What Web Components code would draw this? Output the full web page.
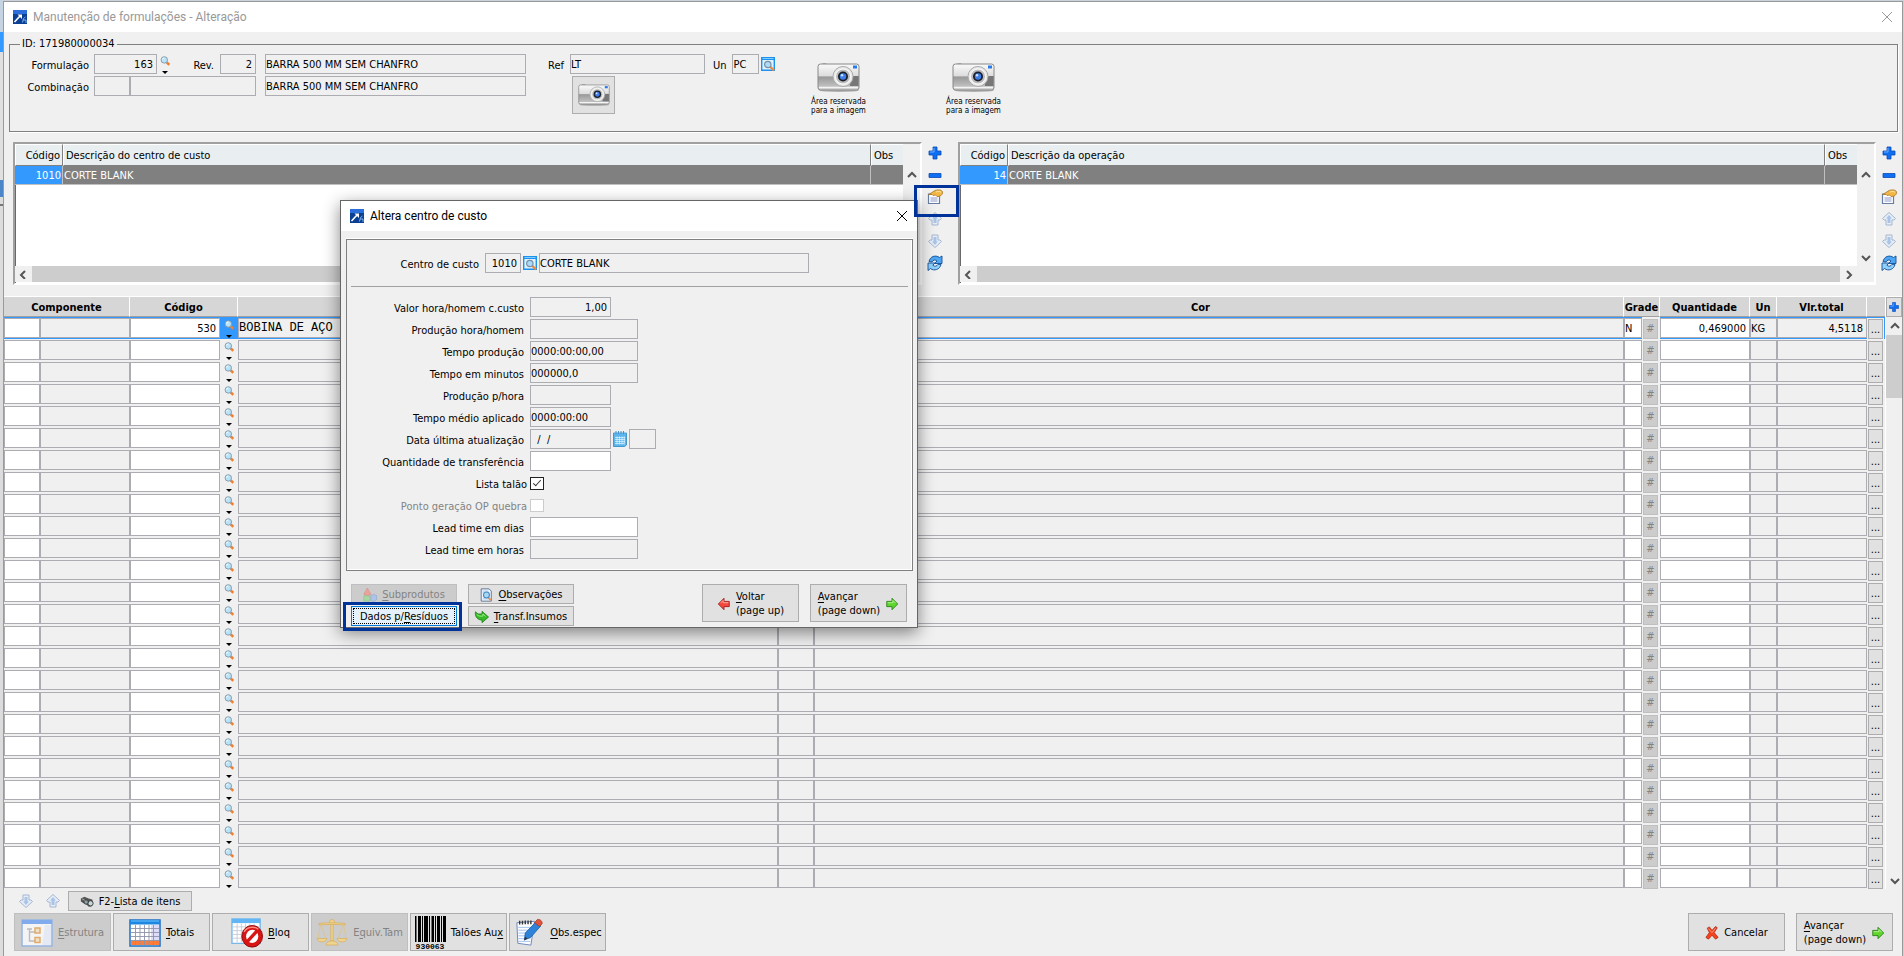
<!DOCTYPE html>
<html lang="pt-BR">
<head>
<meta charset="utf-8">
<title>Manutenção de formulações - Alteração</title>
<style>
  html, body { margin: 0; }
  body {
    box-sizing: border-box;
    min-height: 100vh;
    padding: 1px 1px 0 3px;
    background:
      linear-gradient(#c5d3e3 0 32px, #3399ff 32px 52px, #e0e0e0 52px 180px, #4a86c8 180px 197px, #dcdcdc 197px 204px, #777 204px 206px, #dcdcdc 206px) 0 0 / 3px 100% no-repeat,
      #c9d1dc;
    font: 11px/14px "DejaVu Sans Condensed", "DejaVu Sans", sans-serif;
    color: #000;
    display: flex;
    --face: #f0f0f0;
    --edge: #abadb3;
    --button: #e1e1e1;
    --accent: #3399ff;
    --mark: #003399;
  }
</style>
</head>
<body>
<erp-window></erp-window>

<script>
const RESET = `
  *, *::before, *::after { box-sizing: border-box; }
  :host([hidden]) { display: none; }
  input, button { font: inherit; color: inherit; margin: 0; border-radius: 0; }
  input[type=text] { min-width: 0; width: 100%; height: 20px; padding: 0; border: 1px solid var(--edge); background: #fff; outline: 0; }
  input[readonly] { background: var(--face); }
  input.num { text-align: right; padding-right: 3px; }
  button { padding: 0; }
  u { text-underline-offset: 2px; }
`;

const define = (name, markup, setup) => {
  const template = document.createElement('template');
  template.innerHTML = markup;
  customElements.define(name, class extends HTMLElement {
    constructor() {
      super();
      this.attachShadow({ mode: 'open' });
    }
    connectedCallback() {
      if (this.shadowRoot.childNodes.length) return;
      const holder = document.createElement('template');
      holder.innerHTML = `<style>${RESET}</style>`;
      this.shadowRoot.append(holder.content, template.content.cloneNode(true));
      if (setup) setup(this, this.shadowRoot);
    }
  });
};

/* ---------- icons ---------- */
const LENS = `<path d="M9 9l3.500 3.500" stroke="#f08030" stroke-width="3.500"/><path d="M8 8l2 2" stroke="#999" stroke-width="2"/><circle cx="5.500" cy="5.500" r="4.500" fill="#b8e4fa" stroke="#8795a5" stroke-width="1.300"/><path d="M3 5a2.500 2.500 0 0 1 2.500-2.200" fill="none" stroke="#fff" stroke-width="1.400"/>`;
const CAMERA = `
  <defs><linearGradient id="b" x1="0" y1="0" x2="0" y2="1"><stop offset="0" stop-color="#fafafa"/><stop offset=".45" stop-color="#ddd"/><stop offset=".5" stop-color="#999"/><stop offset="1" stop-color="#cfcfcf"/></linearGradient></defs>
  <ellipse cx="22" cy="28.500" rx="20" ry="1.500" fill="#0004"/>
  <path d="M4 3c0-2 7-2 7 0z" fill="#777"/>
  <rect x="1" y="2" width="41" height="26" rx="2.500" fill="url(#b)" stroke="#888"/>
  <path d="M2 5h39M2 25.500h39" stroke="#f4f4f4" stroke-width="1.500"/>
  <path d="M33 14h8.500v10H33z" fill="#777"/>
  <rect x="36" y="3.500" width="4" height="3" fill="#2a7bea"/>
  <circle cx="26" cy="14.500" r="10" fill="#e9e9e9" stroke="#aaa"/>
  <circle cx="26" cy="14.500" r="7.500" fill="#bbb" stroke="#fff"/>
  <circle cx="26" cy="14.500" r="5" fill="#1a1f2a"/><circle cx="26" cy="14.500" r="3.200" fill="#3f7de8"/><circle cx="25" cy="13.300" r="1.200" fill="#cfe2ff"/>`;
const ARROW_UP = `<path d="M8 1.500l6.500 6-1.500 1.500h-2v5H5V9H3L1.500 7.500z" fill="#e6eef8" stroke="#a5b6cf"/><path d="M8 4l3 3.500H9.500V12h-3V7.500H5z" fill="#a9c4e6"/>`;
const GREEN = `<path d="M1.500 5h6V1.500L14 8l-6.500 6.500V11h-6z" fill="#5fd62c" stroke="#2b7d16" stroke-linejoin="round"/><path d="M2.500 6.500h6V4l3 3" fill="none" stroke="#b9f59a"/>`;
const ICONS = {
  app: ['0 0 14 14', `<path d="M0 0h14v14H0z" fill="#0b3f94"/><path d="M0 0h14v4H0z" fill="#2a6ddb"/><path d="M1.500 12l6-6.500" stroke="#fff" stroke-width="1.600"/><path d="M4.500 4.500H9V9z" fill="#fff"/><path d="M9.500 12.500l1-4 2-1.500M10 10h3v3" fill="none" stroke="#7fb0ef"/>`],
  close: ['0 0 12 12', `<path d="M1 1l10 10M11 1L1 11" stroke="currentColor" fill="none"/>`],
  lens: ['0 0 13 14', LENS],
  lookup: ['0 0 14 14', `<path d="M.7.700h12.600v12.600H.7z" fill="#dff3fd" stroke="#1e90ee" stroke-width="1.400"/><path d="M0 0h14v3H0z" fill="#1e90ee"/><path d="M1.500 1.500h11" stroke="#7fd0ff"/><path d="M9 9.500l4 4" stroke="#ef8a3c" stroke-width="2.400"/><circle cx="6.800" cy="7.500" r="3.200" fill="#a9dcf8" stroke="#7c8ea3" stroke-width="1.200"/>`],
  camera: ['0 0 43 31', CAMERA],
  plus: ['0 0 16 16', `<path d="M6 2h4v4h4v4h-4v4H6v-4H2V6h4z" fill="#0f6ef2" stroke="#0a4db8" stroke-width=".8"/><path d="M7 3v4H3" fill="none" stroke="#6db2ff"/>`],
  minus: ['0 0 16 16', `<path d="M2 6.500h12v4H2z" fill="#0f6ef2" stroke="#0a4db8" stroke-width=".8"/>`],
  edit: ['0 0 16 16', `<path d="M1.500 5h11v9.500h-11z" fill="#fff" stroke="#667da5" stroke-width="1.200"/><path d="M3.500 8h7v5h-7z" fill="#c6cbe6"/><path d="M1.500 5.500L5 3.500l3-2c3-1 7-1 7.500 1.500S13 8 10 7.500L8.500 6 6 6.500l-1-1z" fill="#f2b743" stroke="#a8752a" stroke-width=".8"/><path d="M9 3c2-.8 4-.6 5 .3" stroke="#fde6a5" fill="none"/>`],
  up: ['0 0 16 16', ARROW_UP],
  down: ['0 0 16 16', `<g transform="rotate(180 8 8)">${ARROW_UP}</g>`],
  refresh: ['0 0 16 16', `<path d="M2 6.500C3 1.500 8.500-.5 12.500 2.500L15 1v7.500H7.500l2.500-2.500C8.500 4.500 6 4.800 5 7z" fill="#4ea6f2" stroke="#134f96" stroke-width=".9"/><path d="M14 9.500c-1 5-7 7-10.500 4L1 15.500V8h7L5.800 10.200c1.700 1.600 4 1.300 5.200-.9z" fill="#8fd0fb" stroke="#134f96" stroke-width=".9"/>`],
  calendar: ['0 0 14 16', `<path d="M.5 2h13v12l-2 1.500H.5z" fill="#5eb5ec" stroke="#2b86c5" stroke-width=".8"/><path d="M1 2h12v2H1z" fill="#58b4ee"/><path d="M3 0v3M5.500 0v3M8 0v3M10.500 0v3" stroke="#4a90c4"/><path d="M2 6.500h10M2 8.500h10M2 10.500h10M2 12.500h9M4 5.500v8M6.500 5.500v8M9 5.500v8M11.300 5.500v8" stroke="#e3f5ff" stroke-width=".7"/>`],
  shapes: ['0 0 16 16', `<path d="M5 0l4 7c-1 2-7 2-8 0z" fill="#f29a8e" stroke="#d87468" stroke-width=".6"/><path d="M1 9h7v6H1z" fill="#9fdc9a" stroke="#76b872" stroke-width=".6"/><path d="M9 8.500l3-1.200 3.500 1.200v5L12 15.500l-3-1.500z" fill="#a5c3f2" stroke="#7696cc" stroke-width=".6"/>`],
  notes: ['0 0 14 16', `<path d="M1.500 1h9l2.500 2.500V15H1.500z" fill="#f5f9ff" stroke="#50688c"/><path d="M3 3.500h7M3 5.500h8M3 12.500h8" stroke="#9cc4ee"/><path d="M9 10l3.500 4" stroke="#ef8a3c" stroke-width="2"/><circle cx="7.500" cy="8" r="3.400" fill="#a4d8f7" stroke="#4d86bd" stroke-width="1.200"/>`],
  transfer: ['0 0 16 14', `<path d="M.5 1l3 2.500h4.500V.5L15.500 7 8 13.500v-3C3.500 10.500-.5 7 .5 1z" fill="#35bb27" stroke="#1c6f14" stroke-width=".8" stroke-linejoin="round"/><path d="M2 4c2 2.500 4 2 7 2V3.500l3 3" stroke="#a2f08c" fill="none"/>`],
  next: ['0 0 15 16', GREEN],
  back: ['0 0 15 16', `<path d="M13.500 5h-6V1.500L1 8l6.500 6.500V11h6z" fill="#f5483c" stroke="#a01818" stroke-linejoin="round"/><path d="M12.500 6.500h-6V4L3.500 7" fill="none" stroke="#ffb3aa"/>`],
  cancel: ['0 0 16 16', `<path d="M2.500 2.500L5 1l3 4 4-4.500 2 1.500-3.500 5.500L15 13l-3 2-4-4.500L4 15l-3-2 4-5.500z" fill="#f7431d" stroke="#a41d0c" stroke-width=".8" stroke-linejoin="round"/><path d="M4 3l4 4.500 4-5" stroke="#ff9c80" fill="none"/>`],
  binoculars: ['0 0 16 14', `<path d="M1 3l4-2 5 2 4 1 1 4-2 4-3 .5-3-3-3-1-3-2z" fill="#555"/><circle cx="12" cy="8.500" r="3" fill="#c5d5db" stroke="#333"/><circle cx="7" cy="7" r="2.500" fill="#8ba0a8" stroke="#333"/><path d="M2.500 3.500l3 1.500" stroke="#bbb"/>`],
  tree: ['0 0 32 28', `<path d="M1 1h30v26H1z" fill="#fff" stroke="#8ab0e8" stroke-width="1.500"/><path d="M1 1h30v4H1z" fill="#6fa3f5"/><path d="M6 10h5M8.500 10v12H14M8.500 13H14" stroke="#b8b8b8" fill="none" stroke-width="1.400"/><path d="M14 9h5v5h-5zM14 18.500h5v5h-5z" fill="#fde6c3" stroke="#e5a458" stroke-width="1.500"/><path d="M24 6h6v20h-9z" fill="#dfe8fb" opacity=".6"/>`],
  totals: ['0 0 32 28', `<path d="M1 1h30v26H1z" fill="#fff" stroke="#1e6fc4" stroke-width="1.500"/><path d="M22 6h8v16h-8z" fill="#dcdcf8"/><path d="M1 1h30v4.500H1z" fill="#1c86e0"/><path d="M2 2h28" stroke="#6fc3ff"/><path d="M2 21.500h28v4.500H2z" fill="#ff7b38"/><path d="M6.500 6v20M11 6v20M15.500 6v20M20 6v20M24.500 6v20M2 9.500h28M2 13.500h28M2 17.500h28M2 21.500h28" stroke="#8f93a8" stroke-width=".9"/>`],
  block: ['0 0 34 32', `<path d="M1 1h30v26H1z" fill="#fff" stroke="#79b8ea" stroke-width="1.500"/><path d="M1 1h30v4.500H1z" fill="#62b6f5"/><path d="M6.500 6v20M11 6v20M15.500 6v20M20 6v20M24.500 6v20M2 9.500h28M2 13.500h28M2 17.500h28M2 21.500h28" stroke="#c3c6d2" stroke-width=".9"/><ellipse cx="22.500" cy="19.500" rx="11" ry="11.500" fill="#d81414" stroke="#8d0606"/><ellipse cx="22.500" cy="19.500" rx="6.500" ry="7" fill="#fff"/><path d="M17.500 25l10-11" stroke="#d81414" stroke-width="3.500"/><path d="M14 15c2-5 10-7 15-3" stroke="#ff8a80" fill="none" stroke-width="1.500"/>`],
  scale: ['0 0 32 28', `<g fill="#f8d77c" stroke="#dba94a" stroke-width=".8"><path d="M14.800 5h2.400v17h-2.400z"/><circle cx="16" cy="3" r="2.500"/><path d="M3 4.500c8-1 18-1 26 0v1.500c-8-.8-18-.8-26 0z"/><path d="M1 19.500h10c-1 4.500-9 4.500-10 0zM21 19.500h10c-1 4.500-9 4.500-10 0z"/><path d="M10 26c0-2.500 3-4 6-4s6 1.500 6 4z"/></g><path d="M4.500 6L2 19.500M5 6l5 13.500M27 6l-5 13.500M27.500 6L30 19.500" stroke="#e3c27a" stroke-width=".8"/>`],
  barcode: ['0 0 32 34', `<path d="M1 0h1.500v26H1zM4 0h3v26H4zM8 0h1v26H8zM10 0h4v26h-4zM15 0h1v26h-1zM17.500 0h2.500v26h-2.500zM21 0h1v26h-1zM23 0h3v26h-3zM27 0h1v26h-1zM29 0h3v26h-3z" fill="#000"/><text x="16" y="33" text-anchor="middle" font-family="Liberation Mono, monospace" font-weight="bold" font-size="8">930063</text>`],
  pencil: ['0 0 30 30', `<path d="M2 4l19-1.500L17 28 3 26z" fill="#fbfdff" stroke="#6b83b8"/><path d="M3.500 9h15M3.500 12h14.500M3.500 15h14M3.500 18h13.500M3.500 21h13M3.500 24h13" stroke="#9fc1ee"/><path d="M5 2v4M8 2v4M11 1.500v4M14 1.500v4M17 1.500v4" stroke="#333" stroke-width="1.500"/><path d="M11 15L22 3.500l5.500 4L17 19.500l-7 3z" fill="#2e83d8" stroke="#1b569c" stroke-width=".8"/><path d="M21 4l3-3.500c3-.5 5.500 2 5 4.500l-2.500 3z" fill="#e0533c" stroke="#a5331f" stroke-width=".8"/><path d="M9.500 23l1.500-4 2.500 2z" fill="#333"/>`]
};

define('erp-icon', `<style>:host{display:inline-block;width:14px;height:14px;flex:none} svg{display:block;width:100%;height:100%;overflow:visible}</style><svg aria-hidden="true"></svg>`,
  (host, root) => {
    const [box, art] = ICONS[host.getAttribute('name')];
    const svg = root.querySelector('svg');
    svg.setAttribute('viewBox', box);
    svg.innerHTML = art;
  });

/* ---------- chrome ---------- */
define('erp-titlebar', `<style>
  :host { display: flex; align-items: center; height: 30px; padding: 0 9px; background: #fff; font: 12px/16px Roboto, sans-serif; }
  h1 { margin: 0 auto 0 6px; font: inherit; }
  button { border: 0; background: none; width: 12px; height: 12px; color: inherit; }
  button erp-icon { width: 12px; height: 12px; display: block; }
</style><erp-icon name="app"></erp-icon><h1><slot></slot></h1><button type="button" aria-label="Fechar"><erp-icon name="close"></erp-icon></button>`);

define('erp-button', `<style>
  :host { display: block; }
  button { display: flex; align-items: center; justify-content: center; gap: 5px; width: 100%; height: 100%; padding-top: 1px; border: 1px solid #adadad; background: var(--button); text-align: left; white-space: nowrap; }
  button:disabled { background: #ccc; border-color: #bfbfbf; color: #838383; }
  :host([disabled]) ::slotted(erp-icon) { opacity: .8; }
  :host([focused]) button { background: #e5f1fb; border-color: #0078d7; outline: 1px dotted #000; outline-offset: -3px; }
  :host([marked]) { position: relative; }
  :host([marked])::after { content: ""; position: absolute; inset: -4px -5px -5px -8px; border: 3px solid var(--mark); pointer-events: none; }
</style><button type="button"><slot></slot></button>`,
  (host, root) => { root.querySelector('button').disabled = host.hasAttribute('disabled'); });

const scrollArrow = { up: 'M1 6l4-4 4 4', down: 'M1 3l4 4 4-4', left: 'M6 1L2 5l4 4', right: 'M3 1l4 4-4 4' };
define('erp-scrollbar', `<style>
  :host { display: flex; flex-direction: column; width: 17px; background: var(--face); }
  :host([horizontal]) { flex-direction: row; width: auto; height: 16px; }
  button { flex: none; width: 17px; height: 18px; border: 0; background: none; display: grid; place-items: center; }
  :host([horizontal]) button { height: 16px; }
  svg { width: 10px; height: 9px; }
  .track { flex: 1; }
  .thumb { background: #cdcdcd; }
</style><button type="button" aria-label="Voltar"></button><div class="track"><div class="thumb"></div></div><button type="button" aria-label="Avançar"></button>`,
  (host, root) => {
    const horizontal = host.hasAttribute('horizontal');
    const names = horizontal ? ['left', 'right'] : ['up', 'down'];
    root.querySelectorAll('button').forEach((b, i) => {
      b.innerHTML = `<svg viewBox="0 0 10 9"><path d="${scrollArrow[names[i]]}" fill="none" stroke="#555" stroke-width="2"/></svg>`;
    });
    const thumb = root.querySelector('.thumb');
    thumb.style[horizontal ? 'width' : 'height'] = host.getAttribute('thumb');
    thumb.style[horizontal ? 'height' : 'width'] = '100%';
  });

define('erp-sidetools', `<style>
  :host { display: flex; flex-direction: column; }
  button { position: relative; width: 18px; height: 22px; margin-left: 4px; border: 0; background: none; display: grid; place-items: center; }
  erp-icon { width: 16px; height: 16px; }
  :host([mark]) .edit::after { content: ""; position: absolute; z-index: 6; left: -12px; top: -1px; width: 45px; height: 32px; border: 3px solid var(--mark); }
</style>`,
  (host, root) => {
    for (const [icon, label] of [['plus', 'Incluir'], ['minus', 'Excluir'], ['edit', 'Alterar'], ['up', 'Subir'], ['down', 'Descer'], ['refresh', 'Atualizar']]) {
      const button = document.createElement('button');
      button.type = 'button';
      button.className = icon;
      button.setAttribute('aria-label', label);
      button.innerHTML = `<erp-icon name="${icon}"></erp-icon>`;
      root.append(button);
    }
  });

/* ---------- upper lists ---------- */
define('erp-list', `<style>
  :host { display: grid; grid-template-columns: minmax(0, 1fr) 17px; grid-template-rows: 1fr 16px; height: 143px; padding-bottom: 1px; background: #fff; border: 2px solid #fff; border-color: #a0a0a0 #fff #fff #a0a0a0; box-shadow: inset 1px 1px #696969; }
  table { width: 100%; border-collapse: separate; border-spacing: 0; table-layout: fixed; }
  th, td { padding: 1px 1px 0; text-align: left; font-weight: normal; white-space: nowrap; overflow: hidden; }
  th { height: 22px; padding: 2px 2px 0; background: #e9eef1; border: 1px solid #fff; border-right-color: #808080; border-bottom-color: #808080; }
  th:last-child { border-right: 0; }
  td { height: 19px; background: #808080; color: #fff; border: 0 solid #c0c0c0; border-width: 0 1px 1px 0; }
  td:last-child { border-right: 0; }
  td:first-child { background: var(--accent); }
  th:first-child, td:first-child { width: 48px; text-align: right; }
  th:last-child { width: 32px; }
  .corner { background: var(--face); }
  .v { padding-top: 22px; }
</style>
<div><table><thead><tr><th>Código</th><th class="h"></th><th>Obs</th></tr></thead><tbody><tr><td class="c"></td><td class="d"></td><td></td></tr></tbody></table></div>
<erp-scrollbar class="v" thumb="0"></erp-scrollbar>
<erp-scrollbar horizontal thumb="100%"></erp-scrollbar><div class="corner"></div>`,
  (host, root) => {
    root.querySelector('.h').textContent = host.getAttribute('heading');
    root.querySelector('.c').textContent = host.getAttribute('code');
    root.querySelector('.d').textContent = host.getAttribute('text');
  });

/* ---------- header of the formulation ---------- */
define('formula-header', `<style>
  :host { display: block; padding: 5px 4px 0 5px; }
  fieldset { display: flex; height: 95px; min-width: 0; margin: 0; padding: 3px 0 0; border: 1px solid #808080; box-shadow: 1px 1px #fff; }
  legend { margin-left: 10px; padding: 0 2px; line-height: 14px; }
  .row { display: flex; align-items: center; height: 20px; margin-bottom: 2px; }
  .row label { padding-top: 3px; text-align: right; margin-right: 6px; }
  .row .w78 { width: 79px; margin-right: 5px; } .w41 { width: 41px; }
  .ids { margin-right: 22px; }
  input.code { width: 63px; } input.small { width: 36px; } input.mid { width: 126px; } input.long { width: 261px; margin-left: 9px; }
  input.ref { width: 135px; } input.un { width: 27px; margin-right: 2px; }
  button.pick { width: 16px; height: 20px; border: 0; background: none; display: grid; justify-items: center; align-content: start; gap: 5px; padding-top: 2px; }
  button.pick erp-icon { width: 10px; height: 10px; }
  button.pick::after { content: ""; border: 3px solid transparent; border-top-color: #000; border-bottom: 0; }
  button.look { border: 0; background: none; width: 14px; height: 14px; }
  .un-label { margin-left: 8px; }
  .photo { width: 43px; height: 38px; margin: 1px 0 0 24px; border: 1px solid #adadad; background: var(--button); display: grid; place-items: center; }
  .photo erp-icon { width: 32px; height: 24px; }
  figure { width: 56px; margin: 8px 0 0 35px; text-align: center; font-size: 8px; line-height: 9px; white-space: nowrap; }
  figure + figure { margin-left: 79px; }
  figure erp-icon { width: 43px; height: 31px; display: block; margin: 0 auto 4px; }
</style>
<fieldset><legend>ID: 171980000034</legend>
  <div class="ids">
    <div class="row"><label class="w78" for="f">Formulação</label><input id="f" class="num code" type="text" readonly value="163"><button type="button" class="pick" aria-label="Pesquisar"><erp-icon name="lens"></erp-icon></button><label class="w41" for="r">Rev.</label><input id="r" class="num small" type="text" readonly value="2"><input class="long" type="text" readonly aria-label="Descrição" value="BARRA 500 MM SEM CHANFRO"></div>
    <div class="row"><label class="w78" for="c">Combinação</label><input id="c" class="small" type="text" readonly><input class="mid" type="text" readonly aria-label="Nome da combinação"><input class="long" type="text" readonly aria-label="Descrição da combinação" value="BARRA 500 MM SEM CHANFRO"></div>
  </div>
  <div>
    <div class="row"><label for="ref">Ref</label><input id="ref" class="ref" type="text" readonly value="LT"><label class="un-label" for="un">Un</label><input id="un" class="un" type="text" readonly value="PC"><button type="button" class="look" aria-label="Pesquisar unidade"><erp-icon name="lookup"></erp-icon></button></div>
    <button type="button" class="photo" aria-label="Imagem"><erp-icon name="camera"></erp-icon></button>
  </div>
  <figure><erp-icon name="camera"></erp-icon><figcaption>Área reservada<br>para a imagem</figcaption></figure>
  <figure><erp-icon name="camera"></erp-icon><figcaption>Área reservada<br>para a imagem</figcaption></figure>
</fieldset>`);

/* ---------- items grid ---------- */
define('items-grid', `<style>
  :host { display: grid; grid-template-columns: minmax(0, 1fr) 16px; border-top: 1px solid #fff; }
  table { width: 100%; border-collapse: separate; border-spacing: 0; table-layout: fixed; border-right: 1px solid #fff; }
  th, td { padding: 0; overflow: hidden; }
  th { height: 20px; padding-top: 2px; background: #d6d6d6; border-right: 1px solid #fff; border-bottom: 1px solid #a0a0a0; line-height: 17px; white-space: nowrap; }
  th:last-child { border-right: 0; }
  td { height: 22px; border: solid transparent; border-width: 1px 0; vertical-align: top; }
  input[type=text], td button { display: block; }
  .sel td:not(.hash) { border-color: var(--accent); }
  .sel .more { border-right: 1px solid var(--accent); }
  .sel .pick { background: var(--accent); }
  .mono { font: 12px/14px "Liberation Mono", monospace; }
  .pick button { width: 18px; height: 20px; border: 0; background: none; display: grid; justify-items: center; align-content: start; gap: 5px; padding-top: 2px; }
  .pick erp-icon { width: 10px; height: 10px; }
  .pick button::after { content: ""; border: 3px solid transparent; border-top-color: #000; border-bottom: 0; }
  td.hash, td.more { border-bottom: 0; }
  .hash button, .more button { width: 15px; height: 20px; margin: 1px 0 0 1px; border: 1px solid #adadad; background: var(--button); }
  .hash button { border-color: #bfbfbf; background: #ccc; color: #838383; }
  .more button { padding-top: 2px; }
  aside { display: flex; flex-direction: column; }
  aside .add { width: 16px; height: 20px; border: 1px solid #adadad; background: var(--button); display: grid; place-items: center; }
  aside .add erp-icon { width: 12px; height: 12px; }
  aside erp-scrollbar { flex: 1; width: 16px; }
</style>
<table>
  <colgroup><col style="width:36px"><col style="width:90px"><col style="width:90px"><col style="width:18px"><col style="width:540px"><col style="width:36px"><col><col style="width:18px"><col style="width:18px"><col style="width:90px"><col style="width:27px"><col style="width:90px"><col style="width:18px"></colgroup>
  <thead><tr><th colspan="2">Componente</th><th colspan="2">Código</th><th></th><th colspan="2">Cor</th><th colspan="2">Grade</th><th>Quantidade</th><th>Un</th><th>Vlr.total</th><th></th></tr></thead>
  <tbody></tbody>
</table>
<aside><button type="button" class="add" aria-label="Incluir item"><erp-icon name="plus"></erp-icon></button><erp-scrollbar thumb="63px"></erp-scrollbar></aside>`,
  (host, root) => {
    const body = root.querySelector('tbody');
    const cell = (label, value = '', extra = '') => `<td><input type="text" aria-label="${label}" value="${value}" ${extra}></td>`;
    for (let i = 0; i < 26; i++) {
      const v = i ? {} : { code: '530', text: 'BOBINA DE AÇO C', grade: 'N', qty: '0,469000', unit: 'KG', total: '4,5118' };
      const tr = document.createElement('tr');
      if (!i) tr.className = 'sel';
      tr.innerHTML = cell('Componente') + cell('Nome do componente', '', 'readonly') + cell('Código', v.code, 'class="num"') +
        `<td class="pick"><button type="button" aria-label="Pesquisar código"><erp-icon name="lens"></erp-icon></button></td>` +
        cell('Descrição', v.text, 'readonly class="mono"') + cell('Código da cor', '', 'readonly') + cell('Cor', '', 'readonly') + cell('Grade', v.grade) +
        `<td class="hash"><button type="button" disabled>#</button></td>` +
        cell('Quantidade', v.qty, 'class="num"') + cell('Unidade', v.unit, 'readonly') + cell('Valor total', v.total, 'readonly class="num"') +
        `<td class="more"><button type="button">...</button></td>`;
      body.append(tr);
    }
  });

/* ---------- footer ---------- */
define('erp-footer', `<style>
  :host { display: block; padding: 2px 9px 4px 10px; }
  .list { display: flex; align-items: center; height: 20px; margin-bottom: 2px; }
  .list .nav { width: 16px; height: 16px; margin-left: 4px; margin-right: 7px; border: 0; background: none; }
  .list .nav erp-icon { width: 16px; height: 16px; display: block; }
  .list erp-button { width: 124px; height: 20px; }
  .bar { display: flex; gap: 2px; height: 38px; }
  .bar erp-button { width: 97px; }
  .push { margin-left: auto; margin-right: 9px; }
  .big { width: 32px; height: 28px; }
  .tall { width: 32px; height: 34px; }
</style>
<div class="list">
  <button type="button" class="nav" aria-label="Descer"><erp-icon name="down"></erp-icon></button>
  <button type="button" class="nav" aria-label="Subir"><erp-icon name="up"></erp-icon></button>
  <erp-button><erp-icon name="binoculars"></erp-icon><span>F2-<u>L</u>ista de itens</span></erp-button>
</div>
<div class="bar">
  <erp-button disabled><erp-icon class="big" name="tree"></erp-icon><span><u>E</u>strutura</span></erp-button>
  <erp-button><erp-icon class="big" name="totals"></erp-icon><span><u>T</u>otais</span></erp-button>
  <erp-button><erp-icon class="tall" name="block"></erp-icon><span><u>B</u>loq</span></erp-button>
  <erp-button disabled><erp-icon class="big" name="scale"></erp-icon><span>E<u>q</u>uiv.Tam</span></erp-button>
  <erp-button><erp-icon class="tall" name="barcode"></erp-icon><span>Talões Au<u>x</u></span></erp-button>
  <erp-button><erp-icon class="big" name="pencil"></erp-icon><span><u>O</u>bs.espec</span></erp-button>
  <erp-button class="push"><erp-icon name="cancel"></erp-icon><span>Cancelar</span></erp-button>
  <erp-button><span><u>A</u>vançar<br>(page down)</span><erp-icon name="next"></erp-icon></erp-button>
</div>`);

/* ---------- dialog ---------- */
define('cost-field', `<style>
  :host { display: flex; align-items: center; height: 20px; }
  label { width: 173px; margin-right: 6px; padding-top: 3px; text-align: right; white-space: nowrap; }
  input[type=text] { width: 81px; }
  :host([wide]) input[type=text] { width: 108px; }
  input[type=checkbox] { appearance: none; position: relative; width: 14px; height: 13px; border: 1px solid #222; background: #fff; }
  input[type=checkbox]:checked::after { content: ""; position: absolute; left: 4px; top: 0; width: 4px; height: 8px; border: solid #333; border-width: 0 1px 1px 0; transform: rotate(42deg); }
  input[type=checkbox]:disabled { border-color: #ccc; }
  :host([disabled]) { color: #838383; }
  :host([check]) label { width: 176px; margin-right: 3px; }
</style><label for="i"></label><input id="i" type="text"><slot></slot>`,
  (host, root) => {
    const input = root.querySelector('input');
    root.querySelector('label').textContent = host.getAttribute('label');
    if (host.hasAttribute('check')) {
      input.type = 'checkbox';
      input.defaultChecked = host.getAttribute('check') === 'on';
      input.disabled = host.hasAttribute('disabled');
      return;
    }
    input.value = host.getAttribute('value') || '';
    input.readOnly = !host.hasAttribute('editable');
    if (host.hasAttribute('numeric')) input.className = 'num';
  });

define('cost-dialog', `<style>
  :host { display: block; position: absolute; z-index: 5; left: 336px; top: 198px; width: 578px; border: 1px solid #666; background: var(--face); box-shadow: 0 5px 16px #0007; }
  .panel { margin: 8px 4px 0 5px; height: 332px; padding: 13px 4px 0; border: 1px solid #808080; box-shadow: inset 0 -1px #fff, inset -1px 0 #fff, 0 -1px #fff; }
  .center { display: flex; align-items: center; height: 20px; }
  .center label { width: 128px; margin-right: 6px; padding-top: 3px; text-align: right; }
  .center .code { width: 36px; } .center .name { width: 270px; }
  .look { flex: none; width: 14px; height: 14px; margin: 0 2px; border: 0; background: none; }
  hr { margin: 13px 0 10px; border: 0; border-top: 1px solid #a0a0a0; }
  .fields { display: grid; gap: 2px; }
  .cal { width: 14px; height: 16px; margin: 0 2px; border: 0; background: none; }
  .cal erp-icon { width: 14px; height: 16px; display: block; }
  input.hour { width: 27px; }
  .actions { display: flex; justify-content: space-between; padding: 13px 10px 0; height: 56px; }
  .left { display: grid; grid-template: 20px 20px / 106px 106px; gap: 2px 11px; }
  .right { display: flex; gap: 11px; height: 38px; }
  .right erp-button { width: 97px; }
</style>
<erp-titlebar>Altera centro de custo</erp-titlebar>
<div class="panel">
  <div class="center"><label for="cc">Centro de custo</label><input id="cc" class="num code" type="text" readonly value="1010"><button type="button" class="look" aria-label="Pesquisar centro de custo"><erp-icon name="lookup"></erp-icon></button><input class="name" type="text" readonly aria-label="Nome do centro de custo" value="CORTE BLANK"></div>
  <hr>
  <div class="fields">
    <cost-field label="Valor hora/homem c.custo" numeric value="1,00"></cost-field>
    <cost-field label="Produção hora/homem" wide></cost-field>
    <cost-field label="Tempo produção" wide value="0000:00:00,00"></cost-field>
    <cost-field label="Tempo em minutos" wide value="000000,0"></cost-field>
    <cost-field label="Produção p/hora"></cost-field>
    <cost-field label="Tempo médio aplicado" value="0000:00:00"></cost-field>
    <cost-field label="Data última atualização" value="  /  /"><button type="button" class="cal" aria-label="Calendário"><erp-icon name="calendar"></erp-icon></button><input class="hour" type="text" readonly aria-label="Hora da atualização"></cost-field>
    <cost-field label="Quantidade de transferência" editable></cost-field>
    <cost-field label="Lista talão" check="on"></cost-field>
    <cost-field label="Ponto geração OP quebra" check="off" disabled></cost-field>
    <cost-field label="Lead time em dias" wide editable></cost-field>
    <cost-field label="Lead time em horas" wide></cost-field>
  </div>
</div>
<div class="actions">
  <div class="left">
    <erp-button disabled><erp-icon name="shapes"></erp-icon><span><u>S</u>ubprodutos</span></erp-button>
    <erp-button><erp-icon name="notes"></erp-icon><span><u>O</u>bservações</span></erp-button>
    <erp-button focused marked><span>Dados p/<u>R</u>esíduos</span></erp-button>
    <erp-button><erp-icon name="transfer"></erp-icon><span><u>T</u>ransf.Insumos</span></erp-button>
  </div>
  <div class="right">
    <erp-button><erp-icon name="back"></erp-icon><span><u>V</u>oltar<br>(page up)</span></erp-button>
    <erp-button><span><u>A</u>vançar<br>(page down)</span><erp-icon name="next"></erp-icon></erp-button>
  </div>
</div>`);

/* ---------- main window ---------- */
define('erp-window', `<style>
  :host { display: flex; flex-direction: column; flex: 1; min-width: 0; position: relative; background: var(--face); border: 1px solid #9a9a9a; border-bottom: 0; }
  .title { color: #999; }
  .lists { display: grid; grid-template-columns: minmax(0, 909fr) 36px minmax(0, 918fr) 26px; padding-left: 9px; margin: 10px 0 11px; }
</style>
<erp-titlebar class="title">Manutenção de formulações - Alteração</erp-titlebar>
<formula-header></formula-header>
<div class="lists">
  <erp-list heading="Descrição do centro de custo" code="1010" text="CORTE BLANK"></erp-list>
  <erp-sidetools mark></erp-sidetools>
  <erp-list heading="Descrição da operação" code="14" text="CORTE BLANK"></erp-list>
  <erp-sidetools></erp-sidetools>
</div>
<items-grid></items-grid>
<erp-footer></erp-footer>
<cost-dialog></cost-dialog>`);
</script>
</body>
</html>
